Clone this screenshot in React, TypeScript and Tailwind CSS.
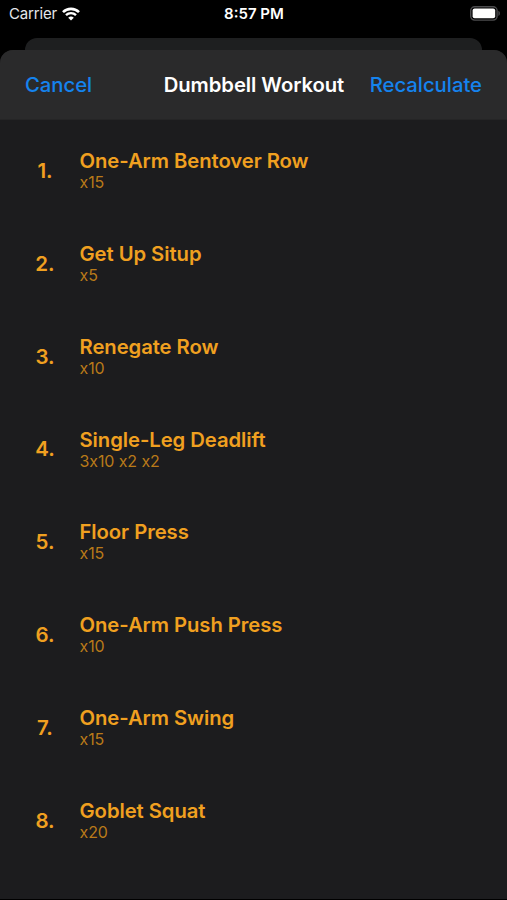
interface Exercise {
    name: string;
    reps: string;
}

const exercises: Exercise[] = [
    { name: 'One-Arm Bentover Row', reps: 'x15' },
    { name: 'Get Up Situp', reps: 'x5' },
    { name: 'Renegate Row', reps: 'x10' },
    { name: 'Single-Leg Deadlift', reps: '3x10 x2 x2' },
    { name: 'Floor Press', reps: 'x15' },
    { name: 'One-Arm Push Press', reps: 'x10' },
    { name: 'One-Arm Swing', reps: 'x15' },
    { name: 'Goblet Squat', reps: 'x20' },
];

function WifiIcon() {
    return (
        <svg width="18" height="14" viewBox="0 0 18 14" fill="none" stroke="white">
            <path d="M1 5.2a11.3 11.3 0 0 1 16 0" strokeWidth="2.6" />
            <path d="M4 8.2a7.1 7.1 0 0 1 10 0" strokeWidth="2.4" />
            <path d="M9 13.6 6.2 10.8a4 4 0 0 1 5.6 0Z" fill="white" stroke="none" />
        </svg>
    );
}

function BatteryIcon() {
    return (
        <svg width="31" height="15" viewBox="0 0 31 15" fill="none">
            <rect x="0.7" y="0.7" width="26.4" height="13.4" rx="4" stroke="#4c4c4e" strokeWidth="1.4" />
            <rect x="2.6" y="2.6" width="22.6" height="9.6" rx="2" fill="white" />
            <path d="M28.4 4.8v5.2c2-.8 2-4.4 0-5.2Z" fill="#4c4c4e" />
        </svg>
    );
}

function StatusBar() {
    return (
        <div className="grid h-[38px] shrink-0 grid-cols-3 items-start pt-[5px] pr-[6px] pl-[9px] text-white">
            <div className="flex items-center gap-[5px]">
                <span className="text-[15px] leading-[18px] tracking-[-0.15px] text-gray-200">Carrier</span>
                <WifiIcon />
            </div>
            <span className="pr-[2px] text-center text-[15px] leading-[18px] font-semibold">8:57 PM</span>
            <div className="flex justify-end pt-[1px]">
                <BatteryIcon />
            </div>
        </div>
    );
}

function ExerciseRow({ exercise, position }: { exercise: Exercise; position: number }) {
    return (
        <li className="flex h-[92.85px] items-center">
            <span className="mr-[24.5px] ml-[35px] w-[20px] pt-[0.5px] text-center text-[20.5px] font-semibold">
                {position}.
            </span>
            <div>
                <h2 className="text-[20.25px] leading-[22px] font-semibold tracking-[-0.06px]">{exercise.name}</h2>
                <p className="text-[16px] leading-[20px] tracking-[-0.1px] text-[#b97a19] [font-feature-settings:'calt'_0]">
                    {exercise.reps}
                </p>
            </div>
        </li>
    );
}

export default function App() {
    return (
        <div className="flex h-[900px] w-[507px] flex-col overflow-hidden bg-black font-['Inter',sans-serif]">
            <StatusBar />
            {/* Edge of the screen stacked behind the sheet */}
            <div className="mx-[25px] h-[12px] shrink-0 rounded-t-[12px] bg-[#1e1f20]" />
            <main className="mb-px flex-1 overflow-hidden rounded-t-[13px] bg-[#1c1c1e]">
                <header className="flex h-[70px] items-center justify-between border-b border-[#252526] bg-[#2a2a2b] px-[25px] pt-[1px] text-[20.25px]">
                    <button className="font-medium text-[#1583ee]">Cancel</button>
                    <h1 className="ml-[46px] font-semibold tracking-[-0.06px] text-white">Dumbbell Workout</h1>
                    <button className="font-medium text-[#1583ee]">Recalculate</button>
                </header>
                <ol className="pt-[4.6px] text-[#f0a020]">
                    {exercises.map((exercise, i) => (
                        <ExerciseRow key={exercise.name} exercise={exercise} position={i + 1} />
                    ))}
                </ol>
            </main>
        </div>
    );
}
